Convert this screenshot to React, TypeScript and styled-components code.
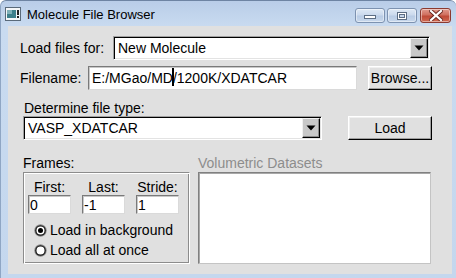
import React from 'react';
import styled, { createGlobalStyle } from 'styled-components';

const Global = createGlobalStyle`
  html, body { margin: 0; padding: 0; background: #ffffff; }
  body { font-family: "Liberation Sans", Arial, sans-serif; font-size: 14px; color: #000; }
  * { box-sizing: border-box; }
`;

const Window = styled.div`
  width: 456px;
  height: 278px;
  display: flex;
  flex-direction: column;
  background: linear-gradient(#b9cde8 0px, #c9dbf0 26px, #c4d7ee 100%);
  border-left: 1px solid #8fa6c4;
  border-top: 1px solid #6e84a3;
  border-radius: 6px 6px 0 0;
  overflow: hidden;
`;

const TitleBar = styled.div`
  height: 25px;
  display: flex;
  align-items: center;
  padding-left: 4px;
  padding-right: 5px;
`;

const Title = styled.span`
  font-family: "Liberation Sans", Arial, sans-serif;
  font-size: 13px;
  color: #000;
  margin-left: 6px;
  flex: 1;
  padding-top: 1px;
`;

const CaptionGroup = styled.div`
  display: flex;
  gap: 2px;
  align-self: flex-start;
  margin-top: 7px;
`;

const CaptionButton = styled.div<{ $close?: boolean }>`
  width: ${(p) => (p.$close ? 31 : 30)}px;
  height: 15px;
  margin-left: ${(p) => (p.$close ? 1 : 0)}px;
  border-radius: 3px;
  border: 1px solid ${(p) => (p.$close ? '#8b3a30' : '#7d92b0')};
  background: ${(p) =>
    p.$close
      ? 'linear-gradient(#e19a8e 0%, #d0705f 45%, #bf4a37 55%, #cf6a52 100%)'
      : 'linear-gradient(#dfe9f5 0%, #cbdaed 45%, #b9cce5 55%, #c8d8ec 100%)'};
  box-shadow: inset 0 0 0 1px rgba(255, 255, 255, 0.45);
  display: flex;
  align-items: center;
  justify-content: center;
`;

const Content = styled.div`
  flex: 1;
  margin: 0 4px 4px 7px;
  background: #e0e0e0;
  padding-top: 10px;
  display: flex;
  flex-direction: column;
`;

const Row = styled.div<{ $mt?: number; $ml?: number }>`
  display: flex;
  align-items: center;
  margin-top: ${(p) => p.$mt ?? 0}px;
  margin-left: ${(p) => p.$ml ?? 0}px;
`;

const Label = styled.span<{ $w?: number; $muted?: boolean }>`
  font-size: 14px;
  line-height: 16px;
  white-space: nowrap;
  color: ${(p) => (p.$muted ? '#8d8d8d' : '#000')};
  ${(p) => (p.$w ? `width: ${p.$w}px;` : '')}
`;

const SectionLabel = styled.div<{ $mt?: number; $ml?: number }>`
  font-size: 14px;
  line-height: 16px;
  white-space: nowrap;
  margin-top: ${(p) => p.$mt ?? 0}px;
  margin-left: ${(p) => p.$ml ?? 0}px;
`;

const Combo = styled.div<{ $w: number }>`
  width: ${(p) => p.$w}px;
  height: 24px;
  background: #fff;
  border: 1px solid;
  border-color: #a0a0a0 #ffffff #ffffff #a0a0a0;
  box-shadow: inset 1px 1px 0 #000, inset -1px -1px 0 #e3e3e3;
  display: flex;
  align-items: center;
  padding: 0 1px 0 4px;
`;

const ComboText = styled.span`
  flex: 1;
  font-size: 14px;
  line-height: 16px;
  white-space: nowrap;
  overflow: hidden;
`;

const ArrowButton = styled.div`
  width: 18px;
  height: 20px;
  background: #c8c8c8;
  border: 1px solid;
  border-color: #f0f0f0 #000 #000 #f0f0f0;
  box-shadow: inset -1px -1px 0 #8a8a8a;
  display: flex;
  align-items: center;
  justify-content: center;
`;

const Entry = styled.div<{ $w: number; $h?: number; $pl?: number }>`
  width: ${(p) => p.$w}px;
  height: ${(p) => p.$h ?? 24}px;
  background: #fff;
  border: 1px solid;
  border-color: #7a7a7a #dadada #dadada #7a7a7a;
  box-shadow: inset 1px 1px 0 #c8c8c8;
  display: flex;
  align-items: center;
  padding-left: ${(p) => p.$pl ?? 3}px;
  font-size: 14px;
  line-height: 16px;
  white-space: nowrap;
  overflow: hidden;
`;

const Caret = styled.span`
  display: inline-block;
  width: 2px;
  height: 18px;
  background: #000;
  margin-right: -1px;
  margin-left: -1px;
  vertical-align: middle;
  position: relative;
  top: -1px;
`;

const Button = styled.div<{ $w: number; $ml?: number }>`
  width: ${(p) => p.$w}px;
  height: 24px;
  margin-left: ${(p) => p.$ml ?? 0}px;
  background: #e0e0e0;
  border: 1px solid;
  border-color: #ffffff #000 #000 #ffffff;
  box-shadow: inset -1px -1px 0 #a0a0a0, inset 1px 1px 0 #f0f0f0;
  display: flex;
  align-items: center;
  justify-content: center;
  font-size: 14px;
  line-height: 16px;
  padding-bottom: 1px;
`;

const Bottom = styled.div`
  display: flex;
  margin-left: 15px;
  margin-top: 15px;
  gap: 8px;
`;

const Column = styled.div<{ $w: number }>`
  width: ${(p) => p.$w}px;
  display: flex;
  flex-direction: column;
`;

const Group = styled.div`
  margin-top: 1px;
  height: 92px;
  border: 1px solid;
  border-color: #8c8c8c #ffffff #ffffff #8c8c8c;
  box-shadow: inset 1px 1px 0 #ffffff, inset -1px -1px 0 #8c8c8c;
  padding: 6px 7px 0 4px;
`;

const FieldGrid = styled.div`
  display: grid;
  grid-template-columns: 43px 43px 43px;
  column-gap: 11px;
`;

const FieldLabel = styled.span`
  text-align: center;
  font-size: 14px;
  line-height: 16px;
`;

const RadioRow = styled.div<{ $mt?: number }>`
  display: flex;
  align-items: center;
  height: 20px;
  margin-top: ${(p) => p.$mt ?? 0}px;
  padding-left: 6px;
  gap: 3px;
  font-size: 14px;
`;

const ListBox = styled.div`
  margin-top: 1px;
  height: 92px;
  background: #fff;
  border: 1px solid;
  border-color: #808080 #c4c4c4 #c4c4c4 #808080;
  box-shadow: inset 1px 1px 0 #a8a8a8;
`;

const DownTriangle = () => (
  <svg width="10" height="6" viewBox="0 0 10 6">
    <path d="M0.5 0.5 L9.5 0.5 L5 5.5 Z" fill="#000" />
  </svg>
);

const Radio = ({ checked }: { checked?: boolean }) => (
  <svg width="13" height="13" viewBox="0 0 13 13">
    <circle cx="6.5" cy="6.5" r="6.2" fill="#8a8a8a" />
    <circle cx="6.5" cy="6.5" r="5.3" fill="#1a1a1a" />
    <circle cx="6.5" cy="6.5" r="4" fill="#ffffff" />
    {checked && <circle cx="6.5" cy="6.5" r="2.5" fill="#000" />}
  </svg>
);

const AppIcon = () => (
  <svg width="16" height="14" viewBox="0 0 16 14">
    <rect x="0.5" y="0.5" width="15" height="13" fill="#f4f6f8" stroke="#5a6a7a" />
    <rect x="2" y="3" width="9" height="8" fill="#3d7f8a" />
    <rect x="2" y="3" width="5" height="4" fill="#7fb0b8" />
    <rect x="12" y="3" width="2" height="5" fill="#222" />
    <rect x="12" y="9" width="2" height="2" fill="#222" />
  </svg>
);

const MinGlyph = () => (
  <svg width="14" height="8" viewBox="0 0 14 8">
    <rect x="1.5" y="3.5" width="11" height="3" fill="#fff" stroke="#5d6e84" />
  </svg>
);

const MaxGlyph = () => (
  <svg width="12" height="10" viewBox="0 0 12 10">
    <rect x="1.5" y="1.5" width="9" height="7" fill="#fff" stroke="#5d6e84" />
    <rect x="3.5" y="3.5" width="5" height="3" fill="#c6d6ea" stroke="#5d6e84" />
  </svg>
);

const CloseGlyph = () => (
  <svg width="14" height="11" viewBox="0 0 14 11">
    <path d="M2 1 L12 10 M12 1 L2 10" stroke="#6b2a22" strokeWidth="4" strokeLinecap="square" />
    <path d="M2 1 L12 10 M12 1 L2 10" stroke="#fff" strokeWidth="2.2" strokeLinecap="square" />
  </svg>
);

export default function App() {
  return (
    <>
      <Global />
      <Window>
        <TitleBar>
          <AppIcon />
          <Title>Molecule File Browser</Title>
          <CaptionGroup>
            <CaptionButton><MinGlyph /></CaptionButton>
            <CaptionButton><MaxGlyph /></CaptionButton>
            <CaptionButton $close><CloseGlyph /></CaptionButton>
          </CaptionGroup>
        </TitleBar>
        <Content>
          <Row $ml={12}>
            <Label $w={93}>Load files for:</Label>
            <Combo $w={317}>
              <ComboText>New Molecule</ComboText>
              <ArrowButton><DownTriangle /></ArrowButton>
            </Combo>
          </Row>
          <Row $ml={12} $mt={6}>
            <Label $w={68}>Filename:</Label>
            <Entry $w={269}>
              E:/MGao/MD<Caret />/1200K/XDATCAR
            </Entry>
            <Button $w={64} $ml={11}>Browse...</Button>
          </Row>
          <SectionLabel $mt={10} $ml={16}>Determine file type:</SectionLabel>
          <Row $ml={15}>
            <Combo $w={299}>
              <ComboText>VASP_XDATCAR</ComboText>
              <ArrowButton><DownTriangle /></ArrowButton>
            </Combo>
            <Button $w={84} $ml={26}>Load</Button>
          </Row>
          <Bottom>
            <Column $w={167}>
              <Label>Frames:</Label>
              <Group>
                <FieldGrid>
                  <FieldLabel>First:</FieldLabel>
                  <FieldLabel>Last:</FieldLabel>
                  <FieldLabel>Stride:</FieldLabel>
                  <Entry $w={43} $h={19} $pl={1}>0</Entry>
                  <Entry $w={43} $h={19} $pl={1}>-1</Entry>
                  <Entry $w={43} $h={19} $pl={1}>1</Entry>
                </FieldGrid>
                <RadioRow $mt={6}>
                  <Radio checked />
                  <span>Load in background</span>
                </RadioRow>
                <RadioRow>
                  <Radio />
                  <span>Load all at once</span>
                </RadioRow>
              </Group>
            </Column>
            <Column $w={233}>
              <Label $muted>Volumetric Datasets</Label>
              <ListBox />
            </Column>
          </Bottom>
        </Content>
      </Window>
    </>
  );
}
